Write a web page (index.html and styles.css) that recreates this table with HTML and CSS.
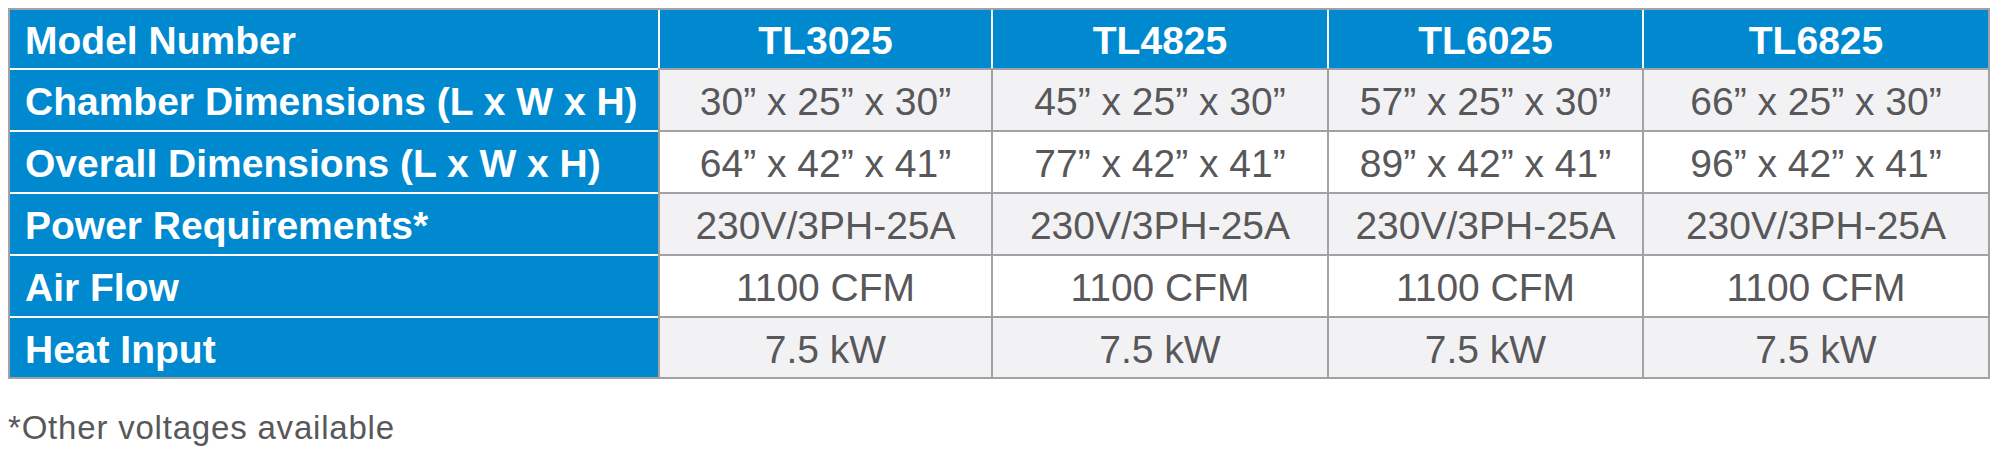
FILE: index.html
```html
<!DOCTYPE html>
<html lang="en">
<head>
<meta charset="utf-8">
<title>Model specifications</title>
<link rel="stylesheet" href="styles.css">
</head>
<body>
<table class="specs">
  <colgroup>
    <col class="c-label">
    <col class="c1">
    <col class="c2">
    <col class="c3">
    <col class="c4">
  </colgroup>
  <thead>
    <tr class="head">
      <th class="label">Model Number</th>
      <th class="model">TL3025</th>
      <th class="model">TL4825</th>
      <th class="model">TL6025</th>
      <th class="model">TL6825</th>
    </tr>
  </thead>
  <tbody>
    <tr class="shade">
      <th class="label">Chamber Dimensions (L x W x H)</th>
      <td>30” x 25” x 30”</td>
      <td>45” x 25” x 30”</td>
      <td>57” x 25” x 30”</td>
      <td>66” x 25” x 30”</td>
    </tr>
    <tr>
      <th class="label">Overall Dimensions (L x W x H)</th>
      <td>64” x 42” x 41”</td>
      <td>77” x 42” x 41”</td>
      <td>89” x 42” x 41”</td>
      <td>96” x 42” x 41”</td>
    </tr>
    <tr class="shade">
      <th class="label">Power Requirements*</th>
      <td>230V/3PH-25A</td>
      <td>230V/3PH-25A</td>
      <td>230V/3PH-25A</td>
      <td>230V/3PH-25A</td>
    </tr>
    <tr>
      <th class="label">Air Flow</th>
      <td>1100 CFM</td>
      <td>1100 CFM</td>
      <td>1100 CFM</td>
      <td>1100 CFM</td>
    </tr>
    <tr class="shade last">
      <th class="label">Heat Input</th>
      <td>7.5 kW</td>
      <td>7.5 kW</td>
      <td>7.5 kW</td>
      <td>7.5 kW</td>
    </tr>
  </tbody>
</table>
<p class="note">*Other voltages available</p>
</body>
</html>
```

FILE: styles.css
```css
html, body {
  background: #ffffff;
}
body {
  margin: 8px;
  font-family: "Liberation Sans", Arial, Helvetica, sans-serif;
}
.specs {
  border-collapse: separate;
  border-spacing: 0;
  table-layout: fixed;
  width: 1982px;
  border: 2px solid #a2a2a4;
}
.c-label { width: 648px; }
.c1 { width: 333px; }
.c2 { width: 336px; }
.c3 { width: 315px; }
.c4 { width: 346px; }

.specs th,
.specs td {
  box-sizing: border-box;
  height: 62px;
  padding: 4px 0 0 0;
  font-size: 39px;
  line-height: 44px;
  vertical-align: middle;
  white-space: nowrap;
}
.specs tr.head th {
  height: 58px;
}
.specs tr.last th,
.specs tr.last td {
  height: 61px;
}
.specs th {
  background: #0089cf;
  color: #ffffff;
  font-weight: bold;
}
.specs th.label {
  text-align: left;
  padding-left: 15px;
}
.specs tbody th.label {
  border-top: 2px solid #ffffff;
}
.specs th.model {
  text-align: center;
  border-left: 2px solid #ffffff;
}
.specs td {
  background: #ffffff;
  color: #58585a;
  text-align: center;
  border-top: 2px solid #a2a2a4;
  border-left: 2px solid #a2a2a4;
}
.specs tr.shade td {
  background: #f2f2f4;
}
.note {
  margin: 31px 0 0 0;
  font-size: 33px;
  line-height: 36px;
  letter-spacing: 0.8px;
  color: #58585a;
}
```
